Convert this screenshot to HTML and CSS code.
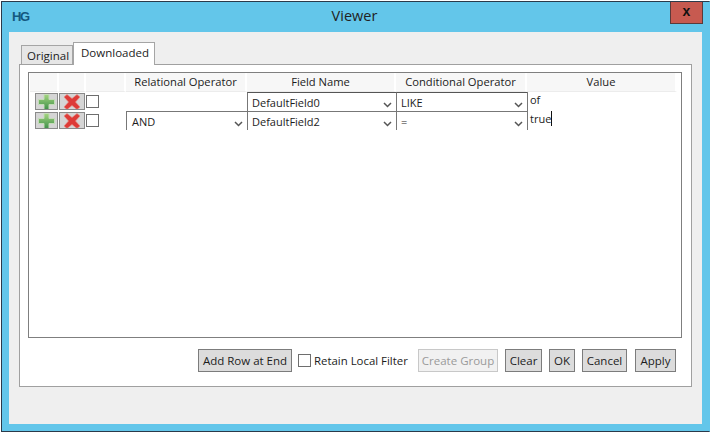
FILE: index.html
```html
<!DOCTYPE html>
<html lang="en">
<head>
    <meta charset="UTF-8">
    <title>Viewer</title>
    <link rel="stylesheet" href="styles.css">
</head>
<body>
    <div class="window">
        <div class="titlebar">
            <span class="logo">HG</span>
            <span class="title">Viewer</span>
            <button class="close">x</button>
        </div>
        <div class="client">
            <div class="tabs">
                <div class="tab">Original</div>
                <div class="tab active">Downloaded</div>
            </div>
            <div class="panel">
                <div class="filter-box">
                    <div class="grid head">
                        <div class="hcell"></div>
                        <div class="hcell"></div>
                        <div class="hcell"></div>
                        <div class="hcell">Relational Operator</div>
                        <div class="hcell">Field Name</div>
                        <div class="hcell">Conditional Operator</div>
                        <div class="hcell">Value</div>
                    </div>
                    <div class="grid row">
                        <button class="icon-btn plus"><svg width="17" height="16" viewBox="0 0 17 16"><defs><linearGradient id="green" x1="0" y1="0" x2="0" y2="1"><stop offset="0" stop-color="#a5d67f"/><stop offset="1" stop-color="#3f8f4a"/></linearGradient></defs><path d="M6 .5h5v5h5.500v5H11v5H6v-5H.5v-5H6z" fill="url(#green)" stroke="#c4dcb8"/></svg></button>
                        <button class="icon-btn cross"><svg width="18" height="16" viewBox="0 0 18 16"><path d="M1 3l3-2.500 5 4 5-4 3 2.500-4.500 5 4.500 5-3 2.500-5-4-5 4-3-2.500 4.500-5z" fill="#dd3b38" stroke="#e88b82" stroke-width=".7"/></svg></button>
                        <div class="check-cell"><span class="check"></span></div>
                        <div class="blank"></div>
                        <div class="select first">DefaultField0<svg class="chev" width="9" height="6" viewBox="0 0 9 6"><path d="M1 1l3.500 3.500L8 1" fill="none" stroke="#555" stroke-width="1.5"/></svg></div>
                        <div class="select first">LIKE<svg class="chev" width="9" height="6" viewBox="0 0 9 6"><path d="M1 1l3.500 3.500L8 1" fill="none" stroke="#555" stroke-width="1.5"/></svg></div>
                        <div class="value">of</div>
                    </div>
                    <div class="grid row">
                        <button class="icon-btn plus"><svg width="17" height="16" viewBox="0 0 17 16"><path d="M6 .5h5v5h5.500v5H11v5H6v-5H.5v-5H6z" fill="url(#green)" stroke="#c4dcb8"/></svg></button>
                        <button class="icon-btn cross"><svg width="18" height="16" viewBox="0 0 18 16"><path d="M1 3l3-2.500 5 4 5-4 3 2.500-4.500 5 4.500 5-3 2.500-5-4-5 4-3-2.500 4.500-5z" fill="#dd3b38" stroke="#e88b82" stroke-width=".7"/></svg></button>
                        <div class="check-cell"><span class="check"></span></div>
                        <div class="select and">AND<svg class="chev" width="9" height="6" viewBox="0 0 9 6"><path d="M1 1l3.500 3.500L8 1" fill="none" stroke="#555" stroke-width="1.5"/></svg></div>
                        <div class="select">DefaultField2<svg class="chev" width="9" height="6" viewBox="0 0 9 6"><path d="M1 1l3.500 3.500L8 1" fill="none" stroke="#555" stroke-width="1.5"/></svg></div>
                        <div class="select">=<svg class="chev" width="9" height="6" viewBox="0 0 9 6"><path d="M1 1l3.500 3.500L8 1" fill="none" stroke="#555" stroke-width="1.5"/></svg></div>
                        <div class="value"><span class="caret">true</span></div>
                    </div>
                </div>
                <div class="actions">
                    <button class="btn add">Add Row at End</button>
                    <label class="retain"><span class="check"></span>Retain Local Filter</label>
                    <button class="btn group" disabled>Create Group</button>
                    <button class="btn clear">Clear</button>
                    <button class="btn ok">OK</button>
                    <button class="btn cancel">Cancel</button>
                    <button class="btn apply">Apply</button>
                </div>
            </div>
        </div>
    </div>
</body>
</html>
```

FILE: styles.css
```css
html, body { margin: 0; height: 100%; overflow: hidden; }
body { background: #fff; font-family: "Open Sans", "Noto Sans", Arial, sans-serif; font-size: 11px; color: #1c1c1c; }
* { box-sizing: border-box; }

.window { width: 709px; height: 431px; margin: 1px 0 0 1px; background: #63c6ea; border: 1px solid #2b3a4a; border-right-color: #63c6ea; padding: 0 7px 7px 7px; display: flex; flex-direction: column; }
.titlebar { height: 30px; display: flex; align-items: center; position: relative; justify-content: center; }
.logo { position: absolute; left: 3px; top: 7px; font-family: "Liberation Sans", sans-serif; font-weight: bold; font-size: 13px; color: #14587f; letter-spacing: -1.5px; }
.title { font-size: 14.5px; color: #222; position: relative; left: -1px; top: -2px; }
.close { position: absolute; right: -1px; top: 0; width: 33px; height: 22px; background: #c75a50; border: 1px solid #5a3a3a; border-top: none; font: bold 14px "Liberation Sans", sans-serif; color: #111; padding: 0 0 4px; }

.client { flex: 1; background: #efefef; padding: 10px 10px 37px; display: flex; flex-direction: column; }
.tabs { display: flex; align-items: flex-end; height: 22px; margin-left: 2px; position: relative; z-index: 1; }
.tab { height: 19px; width: 52px; background: #e6e6e6; border: 1px solid #a5a5a5; border-bottom: none; padding: 2px 0 0 5px; font-size: 11.5px; }
.tab.active { height: 23px; width: 82px; background: #fff; padding: 2px 0 0 7px; margin-bottom: -1px; }

.panel { flex: 1; background: #fff; border: 1px solid #a0a0a0; padding: 7px 9px 0 8px; display: flex; flex-direction: column; }
.filter-box { height: 266px; border: 1px solid #7f7f7f; padding-left: 1px; }
.grid { display: grid; grid-template-columns: 29px 27px 40px 121px 149px 131px 150px; }
.head { height: 19px; }
.hcell { background: #f7f7f7; border-right: 2px solid #fff; border-bottom: 1px solid #ececec; text-align: center; font-size: 11.2px; line-height: 18px; }
.row { height: 19px; }
.icon-btn { height: 17px; margin-top: 1px; padding: 0; background: #d5d5d5; border: 1px solid #8a8a8a; display: flex; align-items: center; justify-content: center; overflow: hidden; }
.plus { width: 23px; margin-left: 5px; }
.cross { width: 26px; margin-left: 0; }
.check-cell { padding-top: 3px; }
.check { display: block; width: 13px; height: 13px; background: #fff; border: 1px solid #6e6e6e; }
.select { border-left: 1px solid #777; border-top: 1px solid #777; padding: 2px 0 0 4px; position: relative; font-size: 11px; line-height: 16px; }
.select.first { border-top: 1px solid #555; }
.select.and { padding-left: 5px; }
.chev { position: absolute; right: 4px; top: 9px; }
.value { padding-left: 2px; border-left: 1px solid #777; line-height: 16px; font-size: 11px; }
.caret { border-right: 1px solid #111; }

.actions { display: flex; align-items: flex-start; margin-top: 11px; padding-left: 170px; }
.btn { height: 23px; padding: 0; background: #dcdcdc; border: 1px solid #7c7c7c; font: 11.5px "Open Sans", "Noto Sans", Arial, sans-serif; color: #1c1c1c; }
.add { width: 94px; }
.retain { display: flex; align-items: center; width: 120px; margin-left: 6px; height: 22px; gap: 3px; font-size: 11.4px; }
.group { width: 80px; background: #f1f1f1; border-color: #c8c8c8; color: #9a9a9a; }
.clear { width: 37px; margin-left: 7px; }
.ok { width: 26px; margin-left: 7px; }
.cancel { width: 45px; margin-left: 7px; }
.apply { width: 41px; margin-left: 8px; }
```
